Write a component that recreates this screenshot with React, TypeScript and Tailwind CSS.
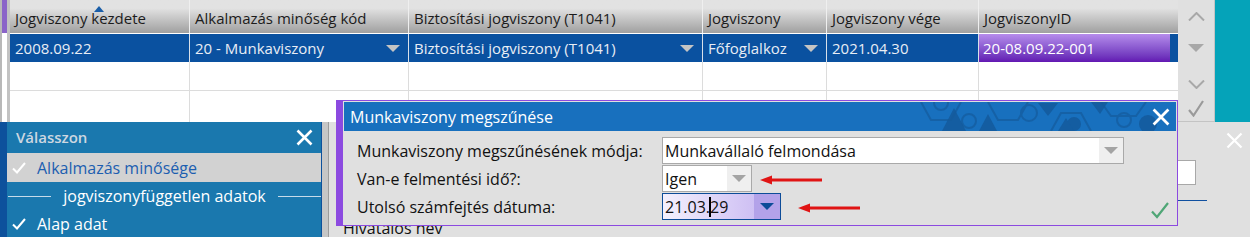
import React from "react";

const cols = [
  { w: "w-[180px]", head: "Jogviszony kezdete", val: "2008.09.22", dd: false },
  { w: "w-[219px]", head: "Alkalmazás minőség kód", val: "20 - Munkaviszony", dd: true },
  { w: "w-[294px]", head: "Biztosítási jogviszony (T1041)", val: "Biztosítási jogviszony (T1041)", dd: true },
  { w: "w-[124px]", head: "Jogviszony", val: "Főfoglalkoz", dd: true },
  { w: "w-[152px]", head: "Jogviszony vége", val: "2021.04.30", dd: false },
];

function Tri({ className = "" }: { className?: string }) {
  return (
    <svg width="14" height="7" viewBox="0 0 14 7" className={className}>
      <path d="M0 0h14L7 7z" fill="currentColor" />
    </svg>
  );
}

function Check({ className = "", w = 14, h = 12, sw = 2 }: { className?: string; w?: number; h?: number; sw?: number }) {
  return (
    <svg width={w} height={h} viewBox="0 0 14 12" className={className}>
      <path d="M1 6.5 L5 10.5 L13 1" fill="none" stroke="currentColor" strokeWidth={sw} />
    </svg>
  );
}

function XIcon({ size = 17, sw = 2.6, className = "" }: { size?: number; sw?: number; className?: string }) {
  return (
    <svg width={size} height={size} viewBox="0 0 17 17" className={className}>
      <path d="M1.5 1.5 L15.5 15.5 M15.5 1.5 L1.5 15.5" stroke="currentColor" strokeWidth={sw} />
    </svg>
  );
}

function RedArrow() {
  return (
    <svg width="62" height="10" viewBox="0 0 62 10" className="text-[#e01414]">
      <path d="M10 5 H62" stroke="currentColor" strokeWidth="3" />
      <path d="M0 5 L12 0.5 L12 9.5 Z" fill="currentColor" />
    </svg>
  );
}

function Grid() {
  return (
    <div className="w-[1168px] flex flex-col bg-white">
      <div className="flex h-[34px] bg-linear-to-b from-[#e2e2e2] from-25% to-[#a0a0a0] border-b border-white text-[#1c1c1c]">
        {cols.map((c, i) => (
          <div key={i} className={`${c.w} relative flex items-center pt-[3px] px-[5px] border-r border-[#efefef] whitespace-nowrap overflow-hidden`}>
            {c.head}
            {i === 0 && (
              <svg width="10" height="6" viewBox="0 0 10 6" className="absolute left-[84px] top-[6px] text-[#1a5ea8]">
                <path d="M0 6 L5 0 L10 6z" fill="currentColor" />
              </svg>
            )}
          </div>
        ))}
        <div className="flex-1 flex items-center pt-[3px] px-[5px]">JogviszonyID</div>
      </div>
      <div className="flex h-[28px] bg-[#0a51a0] text-[#e8edf5]">
        {cols.map((c, i) => (
          <div key={i} className={`${c.w} flex items-center justify-between pl-[5px] pr-[8px] border-r border-[#d8e0ea] whitespace-nowrap overflow-hidden`}>
            <span>{c.val}</span>
            {c.dd && <Tri className="text-[#c4c4c4] shrink-0" />}
          </div>
        ))}
        <div className="flex-1 flex">
          <div className="w-[191px] flex items-center px-[4px] bg-linear-to-b from-[#b68ceb] to-[#6216b2] text-white">20-08.09.22-001</div>
        </div>
      </div>
      <div className="flex h-[29px] border-b border-[#dcdcdc]">
        {cols.map((c, i) => (
          <div key={i} className={`${c.w} border-r border-[#dcdcdc]`} />
        ))}
      </div>
      <div className="flex flex-1">
        {cols.map((c, i) => (
          <div key={i} className={`${c.w} border-r border-[#dcdcdc]`} />
        ))}
      </div>
    </div>
  );
}

function Nav() {
  return (
    <div className="w-[37px] flex flex-col items-center bg-[#e0e0e0] border-b border-[#a6a6a6] border-r border-[#c4c4c4] text-[#a8a8a8]">
      <svg width="17" height="9" viewBox="0 0 17 9" className="mt-[12px]">
        <path d="M1 8.5 L8.5 1 L16 8.5" fill="none" stroke="currentColor" strokeWidth="2" />
      </svg>
      <svg width="16" height="8" viewBox="0 0 16 8" className="mt-[23px]">
        <path d="M0 0h16L8 8z" fill="currentColor" />
      </svg>
      <svg width="17" height="9" viewBox="0 0 17 9" className="mt-[28px]">
        <path d="M1 0.5 L8.5 8 L16 0.5" fill="none" stroke="currentColor" strokeWidth="2" />
      </svg>
      <svg width="16" height="17" viewBox="0 0 16 17" className="mt-[11px] text-[#9a9a9a]">
        <path d="M1 10 L5.5 15.5 L15 1" fill="none" stroke="currentColor" strokeWidth="2.2" />
      </svg>
    </div>
  );
}

function LeftPanel() {
  return (
    <div className="absolute left-0 top-[122px] w-[322px] h-[115px] flex flex-col bg-[#1a78ae] border-l-[7px] border-r border-[#0d519c]">
      <div className="h-[33px] flex items-center justify-between pl-[9px] pr-[8px]">
        <span className="font-semibold text-[#cdd7e1]">Válasszon</span>
        <XIcon className="text-white" />
      </div>
      <div className="h-[31px] flex items-center bg-[#d2d2d2] pl-[5px]">
        <Check className="text-white" />
        <span className="ml-[11px] text-[#1c5eb0] text-[16px]">Alkalmazás minősége</span>
      </div>
      <div className="h-[30px] flex items-center text-white text-[16px]">
        <div className="w-[43px] ml-[1px] h-px bg-[#c6dbea]" />
        <span className="flex-1 text-center">jogviszonyfüggetlen adatok</span>
        <div className="w-[43px] h-px bg-[#c6dbea]" />
      </div>
      <div className="h-[28px] flex items-center pl-[5px] text-white text-[16px]">
        <Check />
        <span className="ml-[11px]">Alap adat</span>
      </div>
    </div>
  );
}

function Hex() {
  return (
    <svg width="300" height="29" viewBox="0 0 300 29" className="absolute right-0 top-0" fill="none">
      <g stroke="#155c9f" strokeWidth="2" opacity="0.75">
        <circle cx="65" cy="1" r="7" />
        <path d="M45 0 L55 18 L75 18 L85 0" />
        <circle cx="93" cy="19" r="7" />
        <path d="M112 0 L122 18 L142 18 L152 0" />
        <circle cx="153" cy="11" r="8" />
        <path d="M175 29 L185 11 L205 11 L215 29" />
        <circle cx="248" cy="18" r="7" />
        <path d="M225 0 L235 14 L260 14 L270 0" />
      </g>
      <g fill="#145a9c" opacity="0.85">
        <path d="M78 6 L90 29 L66 29z" />
        <path d="M103 29 L112 12 L121 29z" />
        <path d="M162 1 L182 1 L172 14z" />
        <circle cx="198" cy="22" r="7" />
        <path d="M182 29 L190 16 L198 29z" />
        <circle cx="272" cy="22" r="9" />
        <path d="M215 0 L232 0 L224 12z" />
      </g>
    </svg>
  );
}

function Dialog() {
  return (
    <div className="absolute left-[336px] top-[100px] w-[842px] h-[126px] flex flex-col p-px bg-[#e0e0e0] border border-[#8c4ae0] border-l-[7px] text-[16px] text-[#111]">
      <div className="relative h-[29px] flex items-center justify-between pl-[6px] pr-[6px] bg-[#1870be] text-white overflow-hidden">
        <Hex />
        <span className="relative">Munkaviszony megszűnése</span>
        <XIcon className="relative" size={18} sw={2.6} />
      </div>
      <div className="flex flex-col gap-px pl-[13px] pr-[9px] pt-[6px]">
        <div className="flex items-center h-[27px]">
          <span className="w-[305px]">Munkaviszony megszűnésének módja:</span>
          <div className="w-[462px] h-[27px] flex bg-white border border-[#a9a9a9]">
            <span className="flex-1 pl-[2px] flex items-center">Munkavállaló felmondása</span>
            <div className="w-[24px] flex items-center justify-center bg-[#efefef]">
              <Tri className="text-[#a4a4a4]" />
            </div>
          </div>
        </div>
        <div className="flex items-center h-[27px]">
          <span className="w-[305px]">Van-e felmentési idő?:</span>
          <div className="w-[90px] h-[27px] flex bg-white border border-[#a9a9a9]">
            <span className="flex-1 pl-[2px] flex items-center">Igen</span>
            <div className="w-[24px] flex items-center justify-center bg-[#efefef]">
              <Tri className="text-[#a4a4a4]" />
            </div>
          </div>
          <div className="ml-[8px] mt-[2px]">
            <RedArrow />
          </div>
        </div>
        <div className="flex items-center h-[27px]">
          <span className="w-[305px]">Utolsó számfejtés dátuma:</span>
          <div className="w-[119px] h-[27px] flex border border-[#0d4c98] bg-linear-to-r from-[#f4f0fd] to-[#c4b2f0]">
            <span className="flex-1 pl-[2px] flex items-center">
              21.03.<span className="inline-block w-[2px] h-[20px] bg-black -mx-px" />29
            </span>
            <div className="w-[26px] flex items-center justify-center bg-[#b3a2e9]">
              <Tri className="text-[#0d4c98]" />
            </div>
          </div>
          <div className="ml-[17px] mt-[3px]">
            <RedArrow />
          </div>
          <div className="flex-1" />
          <svg width="18" height="17" viewBox="0 0 18 17" className="mt-[8px] mr-[-2px] text-[#4fa676]">
            <path d="M1 9.5 L6 15 L17 1" fill="none" stroke="currentColor" strokeWidth="2.2" />
          </svg>
        </div>
      </div>
    </div>
  );
}

export default function App() {
  return (
    <div className="relative w-[1250px] h-[237px] overflow-hidden bg-[#e0e0e0] font-['Open_Sans',sans-serif] text-[15px] text-[#1a1a1a]">
      <div className="flex h-[122px]">
        <div className="w-[7px] flex flex-col border-l-2 border-[#b8b8b8]">
          <div className="h-[33px] bg-[#8a64c8]" />
          <div className="flex-1 bg-white" />
        </div>
        <div className="w-[3px] bg-[#c2c2c2]" />
        <Grid />
        <Nav />
        <div className="flex-1 bg-[#05a3b9]" />
      </div>
      <div className="flex h-[115px]">
        <div className="w-[322px]" />
        <div className="w-[6px] bg-[#c6c6c6]" />
        <div className="flex-1 flex border-l border-[#9c9c9c]">
          <div className="flex-1 pl-[14px] pt-[99px] text-[16px] leading-[14px] text-[#111]">Hivatalos név</div>
          <div className="w-[73px] flex flex-col">
            <div className="flex justify-end mt-[10px] mr-[7px]">
              <XIcon className="text-white" sw={2.2} />
            </div>
            <div className="mt-[11px] w-[19px] h-[25px] bg-white border border-[#a8a8a8]" />
            <div className="mt-[15px] w-[30px] h-px bg-[#1050a0]" />
          </div>
        </div>
      </div>
      <LeftPanel />
      <Dialog />
    </div>
  );
}
